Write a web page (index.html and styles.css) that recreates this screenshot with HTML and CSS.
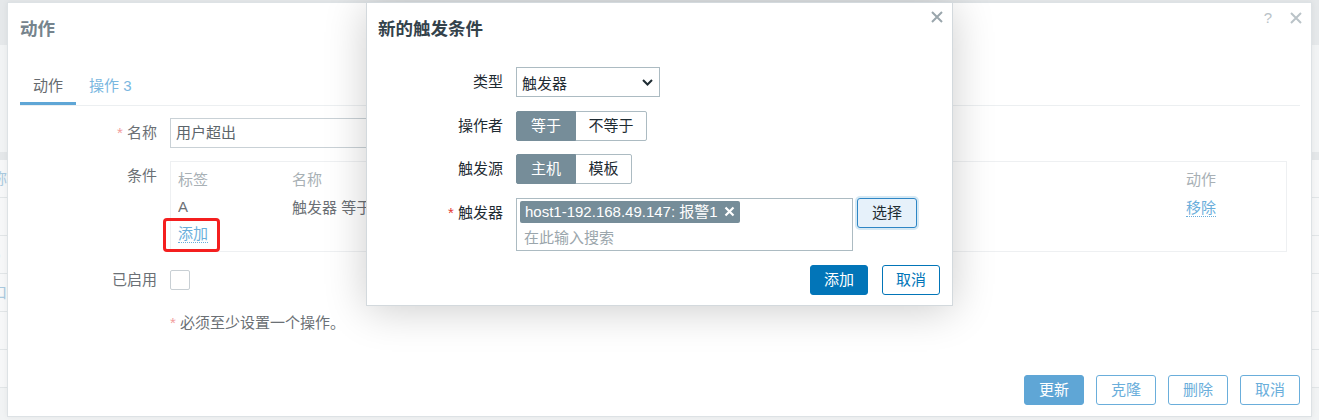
FILE: index.html
```html
<!DOCTYPE html>
<html lang="zh">
<head>
<meta charset="utf-8">
<title>动作</title>
<link rel="stylesheet" href="styles.css">
</head>
<body>
<div class="page">
  <div class="page-top"></div>
  <div class="page-table">
    <div class="pt-head"></div>
    <div class="pt-row"><span>称</span></div>
    <div class="pt-row"><span>g</span></div>
    <div class="pt-row"><span>o</span></div>
    <div class="pt-row"><span>口</span></div>
    <div class="pt-row"></div>
    <div class="pt-row"></div>
  </div>
</div>

<section class="dialog outer">
  <header class="dlg-head">
    <h2 class="dlg-title">动作</h2>
    <div class="dlg-icons">
      <span class="help">?</span>
      <svg class="close" width="12" height="12" viewBox="0 0 12 12"><path d="M1 1L11 11M11 1L1 11"/></svg>
    </div>
  </header>
  <nav class="tabs">
    <span class="tab active">动作</span>
    <span class="tab">操作 3</span>
  </nav>
  <div class="form">
    <label class="lbl"><span class="req">*</span> 名称</label>
    <div class="field"><div class="input">用户超出</div></div>

    <label class="lbl">条件</label>
    <div class="field">
      <div class="cond-table">
        <span class="th">标签</span><span class="th">名称</span><span class="th">动作</span>
        <span class="td">A</span><span class="td">触发器 等于 host1-192.168.49.147: 报警1</span><span class="td"><span class="link">移除</span></span>
        <span class="add-wrap"><span class="link">添加</span><span class="annot"></span></span>
      </div>
    </div>

    <label class="lbl">已启用</label>
    <div class="field"><span class="checkbox"></span></div>

    <span class="lbl"></span>
    <div class="field note"><span class="req">*</span> 必须至少设置一个操作。</div>
  </div>
  <footer class="dlg-foot">
    <button class="btn primary">更新</button>
    <button class="btn">克隆</button>
    <button class="btn">删除</button>
    <button class="btn">取消</button>
  </footer>
</section>

<section class="dialog modal">
  <header class="dlg-head">
    <h2 class="dlg-title">新的触发条件</h2>
    <div class="dlg-icons">
      <svg class="close" width="12" height="12" viewBox="0 0 12 12"><path d="M1 1L11 11M11 1L1 11"/></svg>
    </div>
  </header>
  <div class="mform">
    <label class="mlbl">类型</label>
    <div class="select"><span>触发器</span><svg width="11" height="7" viewBox="0 0 11 7"><path d="M1 1L5.5 5.5L10 1"/></svg></div>

    <label class="mlbl">操作者</label>
    <div class="seg"><span class="seg-item on">等于</span><span class="seg-item">不等于</span></div>

    <label class="mlbl">触发源</label>
    <div class="seg"><span class="seg-item on">主机</span><span class="seg-item">模板</span></div>

    <label class="mlbl"><span class="mreq">*</span> 触发器</label>
    <div class="ms-wrap">
      <div class="ms">
        <span class="pill">host1-192.168.49.147: 报警1<svg width="11" height="11" viewBox="0 0 11 11"><path d="M1.5 1.5L9.5 9.5M9.5 1.5L1.5 9.5"/></svg></span>
        <div class="ph">在此输入搜索</div>
      </div>
      <button class="mbtn select-btn">选择</button>
    </div>
  </div>
  <footer class="mfoot">
    <button class="mbtn primary">添加</button>
    <button class="mbtn outline">取消</button>
  </footer>
</section>
</body>
</html>
```

FILE: styles.css
```css
* { box-sizing: border-box; }
html, body { margin: 0; }
body {
  position: relative;
  width: 1319px;
  height: 420px;
  overflow: hidden;
  font-family: "Liberation Sans", "Noto Sans CJK SC", sans-serif;
  font-size: 15px;
  color: #1f2c33;
  background: #f1f3f4;
}

/* backdrop page */
.page { height: 100%; display: flex; flex-direction: column; }
.page-top { height: 45px; background: #e5e8ea; flex: none; }
.page-table { margin-top: 107px; }
.pt-head { height: 8px; background: #e4e7e9; }
.pt-row {
  height: 38px;
  border-bottom: 1px solid #e1e5e7;
  background: #f6f7f8;
  line-height: 38px;
  color: #a9c9de;
  overflow: hidden;
}
.pt-row span { margin-left: -8px; }

/* dialogs */
.dialog {
  position: absolute;
  background: #fff;
  border: 1px solid #dde2e5;
  display: flex;
  flex-direction: column;
}
.outer {
  left: 7px;
  top: 2px;
  width: 1305px;
  height: 415px;
  padding: 0 11px 11px 12px;
  box-shadow: 0 0 6px rgba(0, 0, 0, 0.06);
}
.modal {
  left: 366px;
  top: 2px;
  width: 587px;
  padding: 0 12px 10px 11px;
  border-color: #d3d9dd;
  box-shadow: 0 4px 40px rgba(0, 0, 0, 0.2);
  z-index: 2;
}
.dlg-head { height: 52px; display: flex; align-items: center; flex: none; }
.dlg-title { margin: 0; flex: 1; font-size: 17.5px; font-weight: bold; line-height: 22px; }
.outer .dlg-title { color: #76848d; }
.modal .dlg-title { color: #34424b; }
.dlg-icons {
  align-self: flex-start;
  margin-top: 9px;
  margin-right: -2px;
  display: flex;
  align-items: center;
  gap: 18px;
}
.modal .dlg-icons { margin-top: 8px; margin-right: -3px; }
.help { color: #b9c2c7; font-size: 15px; line-height: 12px; }
.close path { stroke: #bac3c8; stroke-width: 2; fill: none; }
.modal .close path { stroke: #9aa6ac; }

/* tabs */
.tabs { margin-top: 14px; display: flex; border-bottom: 1px solid #eceff1; flex: none; }
.tab {
  padding: 0 13px;
  line-height: 33px;
  border-bottom: 3px solid transparent;
  color: #7ab7df;
}
.tab.active { color: #666b6f; border-bottom-color: #5fa6d6; }

/* outer form */
.form {
  margin-top: 12px;
  display: grid;
  grid-template-columns: 150px 1fr;
  row-gap: 13px;
  align-items: start;
}
.lbl { text-align: right; padding-right: 13px; line-height: 30px; color: #6b7075; }
.req { color: #f29c9c; }
.input {
  width: 566px;
  height: 30px;
  border: 1px solid #c9d1d6;
  line-height: 28px;
  padding: 0 5px;
  color: #5c656b;
}
.cond-table {
  width: 1117px;
  border: 1px solid #eef0f2;
  padding: 3px 7px;
  display: grid;
  grid-template-columns: 114px 1fr 93px;
  grid-auto-rows: 27.5px;
  align-items: center;
}
.th { color: #a8b0b5; }
.td { color: #6b7075; white-space: nowrap; overflow: hidden; }
.link { color: #6aaedb; border-bottom: 1px dotted #6aaedb; }
.add-wrap { position: relative; justify-self: start; line-height: 27.5px; }
.annot {
  position: absolute;
  left: -15px;
  right: -12px;
  top: -2px;
  bottom: -4.5px;
  border: 3px solid #f41f1f;
  border-radius: 4px;
}
.checkbox {
  display: block;
  width: 20px;
  height: 20px;
  margin-top: 5px;
  border: 1px solid #c8cfd4;
  border-radius: 2px;
}
.note { line-height: 30px; color: #6b7075; }

.dlg-foot { margin-top: auto; display: flex; justify-content: flex-end; gap: 12px; }
.btn {
  height: 30px;
  width: 60px;
  padding: 0;
  border-radius: 3px;
  border: 1px solid #6aaedb;
  background: #fff;
  color: #6aaedb;
  font: inherit;
  line-height: 28px;
}
.btn.primary { background: #5fa6d6; border-color: #5fa6d6; color: #fff; }

/* modal form */
.mform {
  margin-top: 12px;
  display: grid;
  grid-template-columns: 138px auto;
  row-gap: 13.5px;
  align-items: start;
  justify-items: start;
}
.mlbl { justify-self: stretch; text-align: right; padding-right: 13px; line-height: 30px; color: #1f2c33; }
.mreq { color: #e33734; }
.select {
  width: 144px;
  height: 30px;
  border: 1px solid #acbbc2;
  display: flex;
  align-items: center;
  justify-content: space-between;
  padding: 0 6px 0 5px;
}
.select path { stroke: #1f2c33; stroke-width: 2; fill: none; }
.seg { display: inline-flex; height: 30px; }
.seg-item {
  border: 1px solid #acbbc2;
  line-height: 28px;
  padding: 0 12.5px;
  text-align: center;
  background: #fff;
}
.seg-item + .seg-item { margin-left: -1px; border-radius: 0 2px 2px 0; }
.seg-item.on {
  min-width: 60px;
  background: #768d99;
  border-color: #768d99;
  color: #fff;
  border-radius: 2px 0 0 2px;
  position: relative;
  z-index: 1;
}
.ms-wrap { display: flex; align-items: flex-start; gap: 4px; }
.ms {
  width: 337px;
  height: 53px;
  border: 1px solid #acbbc2;
  padding: 2px 3px;
}
.pill {
  display: inline-flex;
  align-items: center;
  height: 22px;
  padding: 0 5px;
  gap: 6px;
  background: #768d99;
  color: #fff;
  border-radius: 2px;
  line-height: 22px;
}
.pill path { stroke: #fff; stroke-width: 2.2; fill: none; }
.ph { color: #9ba6ac; line-height: 26px; margin-top: 2px; padding-left: 4px; }
.mbtn {
  height: 30px;
  padding: 0 13px;
  border-radius: 3px;
  border: 1px solid #0275b8;
  background: #fff;
  color: #0275b8;
  font: inherit;
  line-height: 28px;
}
.select-btn {
  width: 60px;
  padding: 0;
  background: #e6f1fa;
  border-color: #2e86c5;
  color: #1f2c33;
  box-shadow: 0 0 0 2px rgba(2, 117, 184, 0.16);
}
.mbtn.primary { background: #0275b8; color: #fff; }
.mfoot { margin-top: 14.5px; display: flex; justify-content: flex-end; gap: 14px; }
```
